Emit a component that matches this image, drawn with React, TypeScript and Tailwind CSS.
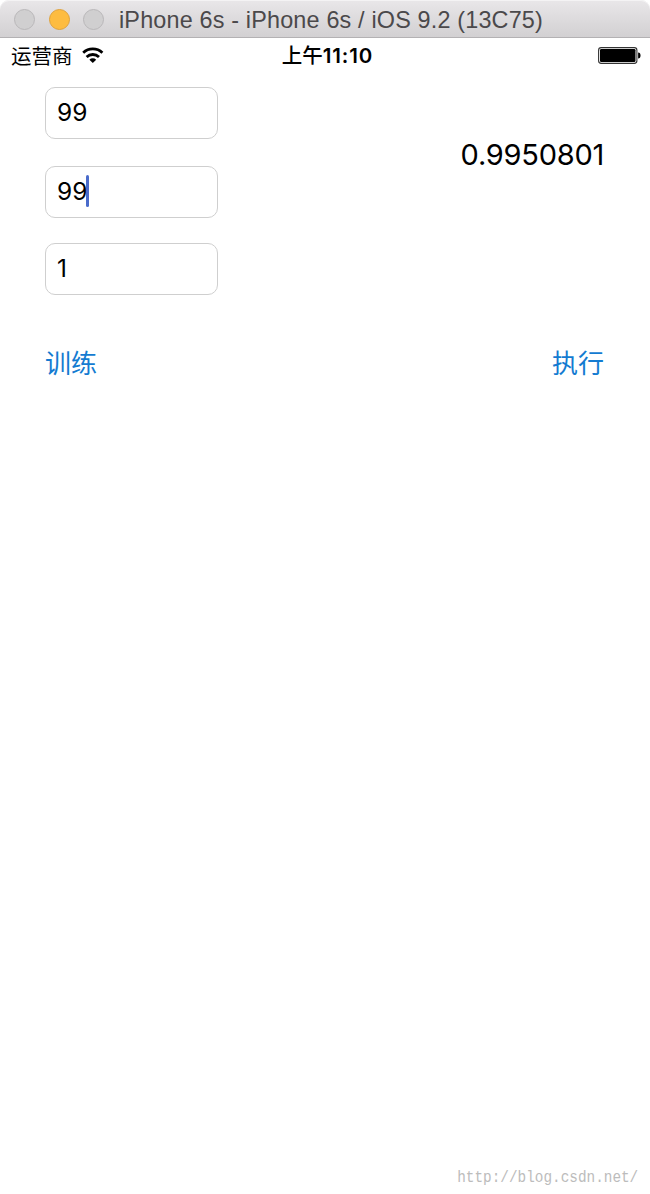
import type { ReactNode } from "react";

const TrafficLight = ({ active = false }: { active?: boolean }) => (
  <span
    className={
      active
        ? "w-[21px] h-[21px] rounded-full border border-[#dfa23c] bg-[#fdbc40]"
        : "w-[21px] h-[21px] rounded-full border border-[#b9b7b9] bg-[#d0cfd0]"
    }
  />
);

const TitleBar = () => (
  <header className="flex items-center h-[38px] shrink-0 pl-3.5 rounded-t-[9px] border-b border-[#b3b1b3] bg-gradient-to-b from-[#e9e7e9] to-[#d2d0d2] shadow-[inset_0_1px_0_#f4f3f4]">
    <div className="flex gap-[13.5px] pt-px">
      <TrafficLight />
      <TrafficLight active />
      <TrafficLight />
    </div>
    <h1 className="ml-[15px] pt-[4px] text-[23.4px] leading-none tracking-[0.17px] whitespace-nowrap text-[#4b494b] font-['Liberation_Sans',sans-serif]">
      iPhone 6s - iPhone 6s / iOS 9.2 (13C75)
    </h1>
  </header>
);

const WifiIcon = () => (
  <svg width="22" height="17" viewBox="0 0 22 17" fill="none" stroke="#000" strokeWidth="2.8">
    <path d="M1.2 5.7a14.2 14.2 0 0 1 19.2 0" />
    <path d="M4.6 10a9 9 0 0 1 12.4 0" />
    <path d="M10.8 16 7.4 12.7a4.8 4.8 0 0 1 6.8 0Z" fill="#000" stroke="none" />
  </svg>
);

const BatteryIcon = () => (
  <svg width="43" height="17" viewBox="0 0 43 17">
    <rect x="0.6" y="0.6" width="38.3" height="15.8" rx="2.6" fill="#fff" stroke="#333" strokeWidth="1.1" />
    <rect x="2" y="2" width="35.5" height="13" rx="1.2" fill="#000" />
    <path d="M40.1 5.5c1.7 0 2.4 1.3 2.4 3s-.7 3-2.4 3Z" fill="#000" />
  </svg>
);

const StatusBar = () => (
  <div className="grid grid-cols-3 items-center h-[36px] pl-[11px] pr-[9px] text-black font-[Inter,'Noto_Sans_CJK_SC',sans-serif]">
    <div className="flex items-center gap-[9px]">
      <span className="pt-[2px] text-[20.5px] leading-none">运营商</span>
      <div className="pb-[2px]">
        <WifiIcon />
      </div>
    </div>
    <span className="pt-px pl-[3px] text-center text-[20.5px] leading-none font-semibold whitespace-nowrap">
      <span className="font-medium">上午</span>
      <span className="tracking-[0.9px]">11:10</span>
    </span>
    <div className="flex justify-end pb-px">
      <BatteryIcon />
    </div>
  </div>
);

const Field = ({ children, focused = false }: { children: ReactNode; focused?: boolean }) => (
  <div className="flex items-center w-[173px] h-[52px] pl-[11px] rounded-[10px] border border-[#cfcfcf] text-[24.5px] leading-none text-black">
    <span className="pb-px">{children}</span>
    {focused && <span className="-ml-[1px] mb-[2px] w-[3px] h-8 rounded-full bg-[#4a6bcb]" />}
  </div>
);

const LinkButton = ({ children }: { children: ReactNode }) => (
  <button className="text-[26px] leading-none text-[#147bd1] font-['Noto_Sans_CJK_SC',sans-serif]">{children}</button>
);

export default function App() {
  return (
    <div className="flex flex-col w-[650px] h-[1194px] bg-white overflow-hidden font-[Inter,'Noto_Sans_CJK_SC',sans-serif]">
      <TitleBar />
      <StatusBar />
      <main className="flex flex-col flex-1 pl-[45px] pr-[46px] pt-[13px]">
        <div className="flex justify-between">
          <div className="flex flex-col">
            <Field>99</Field>
            <div className="mt-[27px]">
              <Field focused>99</Field>
            </div>
            <div className="mt-[25px]">
              <Field>1</Field>
            </div>
          </div>
          <p className="mt-[53px] text-[29px] leading-none tracking-[-0.25px] text-black">0.9950801</p>
        </div>
        <div className="flex justify-between mt-[54px]">
          <LinkButton>训练</LinkButton>
          <LinkButton>执行</LinkButton>
        </div>
      </main>
      <footer className="flex justify-end pr-[12px] pb-[6px] text-[17px] leading-[20px] text-[#bcbcbc] font-['Liberation_Mono',monospace]">
        <span className="origin-right scale-x-[0.845]">http://blog.csdn.net/</span>
      </footer>
    </div>
  );
}
